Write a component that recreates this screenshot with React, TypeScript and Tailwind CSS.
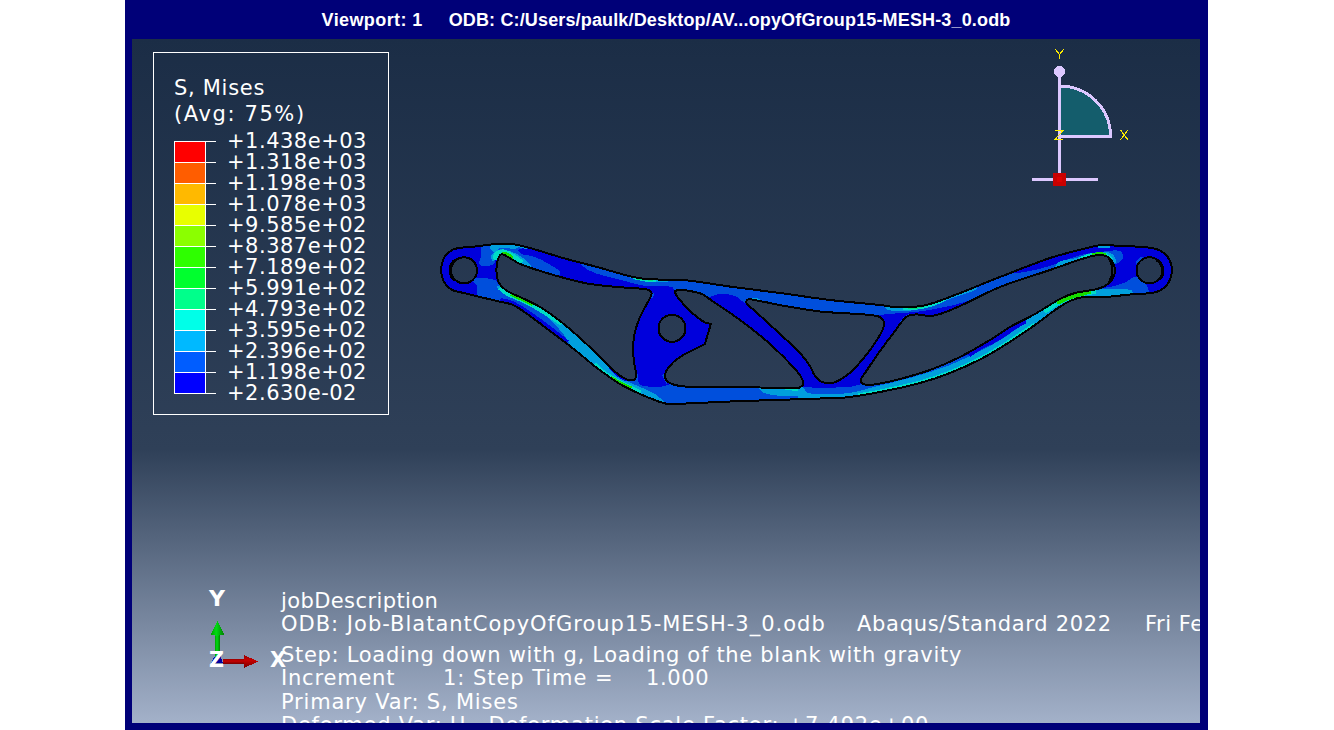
type Pt = [number, number];

/** Smooth curve through a list of points (Catmull-Rom converted to cubic segments). */
function curve(points: Pt[], closed = true): string {
  const n = points.length;
  const at = (i: number): Pt => (closed ? points[(i + n) % n] : points[Math.max(0, Math.min(n - 1, i))]);
  let d = `M${points[0][0]} ${points[0][1]}`;
  const last = closed ? n : n - 1;
  for (let i = 0; i < last; i++) {
    const [p0, p1, p2, p3] = [at(i - 1), at(i), at(i + 1), at(i + 2)];
    const len = Math.hypot(p2[0] - p1[0], p2[1] - p1[1]);
    const handle = (a: Pt, b: Pt): Pt => {
      const l = Math.hypot(b[0] - a[0], b[1] - a[1]) || 1;
      return [((b[0] - a[0]) / l) * len * 0.33, ((b[1] - a[1]) / l) * len * 0.33];
    };
    const h1 = handle(p0, p2);
    const h2 = handle(p1, p3);
    d += `C${p1[0] + h1[0]} ${p1[1] + h1[1]} ${p2[0] - h2[0]} ${p2[1] - h2[1]} ${p2[0]} ${p2[1]}`;
  }
  return closed ? d + 'Z' : d;
}

const circle = (cx: number, cy: number, r: number) =>
  `M${cx - r} ${cy}a${r} ${r} 0 1 0 ${2 * r} 0a${r} ${r} 0 1 0 ${-2 * r} 0Z`;

const outer = curve([
  [463, 247.5], [475, 246.5], [487, 245], [499, 243.7], [512, 244], [530, 248], [563, 258], [597, 267], [633, 277],
  [650, 279.3], [683, 280], [733, 287], [780, 293], [830, 300], [880, 305], [897, 307.3], [914, 307], [930, 304],
  [955, 295], [980, 285], [1000, 277], [1050, 258], [1085, 248.5], [1100, 245.3], [1123, 246], [1150, 247.7],
  [1161, 251], [1169, 259], [1172, 270], [1169, 282], [1161, 290], [1151, 293], [1130, 294.5], [1105, 297], [1083, 297],
  [1070, 301], [1055, 310], [1035, 325], [1005, 345], [980, 359.5], [950, 373], [920, 383], [880, 392], [845, 397.5],
  [820, 398.5], [775, 400], [730, 401.5], [675, 404], [668, 404], [660, 402], [640, 394], [620, 384], [597, 368],
  [575, 350], [550, 331], [530, 316], [513, 305], [497, 301], [480, 297], [464, 293], [452, 290], [444, 282],
  [441, 270], [444, 258], [452, 250],
]);

const leftWindow = curve([
  [501, 254.5], [497.5, 261], [496.5, 272], [499, 283], [507, 291], [520, 297], [540, 307], [560, 321], [580, 338],
  [600, 357], [612, 369], [622, 377], [630, 380.3], [635, 379], [636, 374], [634.5, 365], [633, 350], [634.5, 334],
  [640, 317], [650, 298], [651.5, 293], [647, 289.5], [630, 288], [597, 285], [580, 282], [550, 274], [520, 264], [508, 257],
]);

const middleWindow = curve([
  [675, 292], [679, 290], [690, 291], [702, 294], [708, 298], [740, 320], [770, 344], [796, 370], [803, 381],
  [802, 386], [796, 388.3], [760, 387.5], [700, 387], [680, 386], [668, 382], [665, 376], [668, 368], [680, 357],
  [704.9, 344], [705, 343.7], [710.8, 324], [710.6, 323.8], [704, 322], [690, 311], [680, 300],
]);

const triangleWindow = curve([
  [748, 299.5], [757, 300.5], [785, 306], [820, 311.5], [850, 313.5], [870, 315], [880, 317], [884, 323], [881, 333],
  [870, 350], [855, 368], [843, 378], [832, 383], [822, 382], [815, 376], [810, 366], [800, 353], [780, 334],
  [755, 311], [746.5, 303],
]);

const rightWindow = curve([
  [905, 318], [910, 315.2], [918, 314.5], [930, 316], [940, 314], [960, 306], [1000, 287], [1050, 270], [1085, 258],
  [1100, 255], [1110, 258.5], [1115, 270], [1112, 280], [1105, 286], [1095, 289.5], [1075, 293], [1060, 299],
  [1035, 314], [1010, 327], [990, 340], [960, 357], [930, 370], [900, 379], [880, 383.5], [867, 385], [862, 383],
  [861, 379], [865, 373], [880, 351], [895, 331],
]);

const holes = [circle(464, 270.3, 13), circle(672, 328.3, 13.5), circle(1149.5, 270.3, 13)];
const plate = [outer, leftWindow, middleWindow, triangleWindow, rightWindow, ...holes].join('');

const DARK = '#0000dc';
const MID = '#004fdc';
const LIGHT = '#009fdc';
const TEAL = '#00dcc6';
const SEA = '#00dc7a';
const GREEN = '#16dc00';

const areas: { color: string; pts: Pt[] }[] = [
  { color: MID, pts: [[483, 243], [500, 240], [528, 246], [518, 251], [535, 257], [547, 263], [560, 275], [540, 274], [515, 264], [497, 258], [494, 264], [480, 265], [481, 256]] },
  { color: MID, pts: [[473, 279], [495, 280], [500, 286], [510, 290], [516, 308], [497, 303], [479, 298], [477, 286]] },
  { color: MID, pts: [[579, 260], [588, 270], [605, 276], [625, 281], [645, 286], [672, 287], [676, 293], [700, 294], [708, 297], [720, 294], [735, 296], [747, 304], [780, 308], [820, 314], [870, 316], [888, 314], [915, 312], [940, 308], [965, 302], [990, 292], [1000, 290], [1050, 272], [1085, 262], [1100, 258], [1115, 264], [1123, 258], [1120, 251], [1100, 252], [1080, 255], [1050, 266], [1025, 272], [1004, 274], [980, 280], [900, 304], [780, 290], [650, 274]] },
  { color: MID, pts: [[500, 288], [530, 300], [580, 335], [625, 379], [637, 378], [640, 385], [662, 386.5], [675, 383], [684, 386], [800, 387], [812, 387.5], [850, 387], [862, 384], [890, 380], [930, 370], [965, 356], [1000, 340], [1035, 314], [1065, 294], [1110, 287], [1124, 283], [1137, 277], [1148, 288], [1147, 297], [1080, 300], [980, 363], [850, 400], [670, 408], [620, 386], [560, 338], [535, 319], [510, 301]] },
  { color: MID, pts: [[1136, 262], [1142, 257], [1145, 261], [1139, 266]] },
  { color: LIGHT, pts: [[490, 245], [500, 242], [518, 246], [500, 248], [494, 252]] },
  { color: LIGHT, pts: [[492, 254], [500, 249.5], [512, 252], [523, 258], [530, 267], [512, 260], [499, 256], [493, 261]] },
  { color: LIGHT, pts: [[497, 287], [503, 287], [525, 297], [550, 311], [590, 344], [604, 361], [622, 378], [665, 402], [640, 398], [600, 372], [575, 352], [564, 335], [546, 315], [530, 305], [510, 297]] },
  { color: LIGHT, pts: [[610, 270], [625, 276], [650, 282], [676, 281], [690, 281], [650, 275]] },
  { color: LIGHT, pts: [[885, 306], [903, 311], [925, 308], [950, 299], [975, 288], [940, 298], [905, 305]] },
  { color: LIGHT, pts: [[760, 388], [802, 387], [808, 393], [830, 394], [850, 393], [870, 388], [910, 378], [950, 365], [990, 346], [1018, 328], [1034, 313], [1062, 297], [1095, 290], [1120, 289], [1133, 293], [1120, 298], [1070, 301], [1000, 350], [920, 386], [850, 400], [800, 400], [797, 396], [782, 396], [764, 393]] },
  { color: LIGHT, pts: [[1055, 268], [1080, 257], [1100, 252], [1112, 254], [1115, 263], [1100, 257], [1080, 262]] },
];

const bands: { color: string; w: number; pts: Pt[] }[] = [
  { color: TEAL, w: 5, pts: [[495, 260], [497, 254], [504, 252], [514, 257], [522, 263]] },
  { color: GREEN, w: 3, pts: [[502, 253], [508, 254.5], [513, 258]] },
  { color: LIGHT, w: 3, pts: [[510, 244.5], [520, 246], [527, 248]] },
  { color: DARK, w: 6, pts: [[500, 301], [512, 304], [530, 315], [550, 329.5], [567, 343]] },
  { color: TEAL, w: 6, pts: [[500, 287], [508, 293], [530, 303], [550, 315], [562, 323]] },
  { color: GREEN, w: 4, pts: [[511, 294], [520, 298], [533, 304]] },
  { color: TEAL, w: 7, pts: [[594, 365], [602, 373], [620, 384], [640, 394]] },
  { color: GREEN, w: 5, pts: [[610, 378], [620, 384], [631, 389]] },
  { color: DARK, w: 4, pts: [[610, 367], [618, 374.5], [627, 380]] },
  { color: TEAL, w: 4, pts: [[633, 277], [645, 279.5], [656, 280]] },
  { color: SEA, w: 3, pts: [[637, 278], [653, 279.5]] },
  { color: TEAL, w: 4, pts: [[903, 308], [914, 308], [930, 305], [945, 299]] },
  { color: SEA, w: 3, pts: [[908, 308], [918, 307], [925, 305]] },
  { color: TEAL, w: 4, pts: [[785, 388], [798, 389]] },
  { color: TEAL, w: 5, pts: [[858, 396], [880, 392], [920, 383], [950, 373], [980, 359.5], [1005, 345], [1035, 325]] },
  { color: DARK, w: 7, pts: [[968, 354], [990, 340], [1007, 330], [1025, 320]] },
  { color: TEAL, w: 6, pts: [[1044, 311], [1060, 301], [1080, 293.5], [1096, 291]] },
  { color: GREEN, w: 4, pts: [[1057, 303], [1068, 298], [1078, 295], [1091, 291.5]] },
  { color: TEAL, w: 4, pts: [[1080, 259], [1092, 255], [1105, 255], [1112, 260]] },
  { color: GREEN, w: 3, pts: [[1092, 255], [1100, 253.5], [1106, 255]] },
  { color: LIGHT, w: 3, pts: [[1098, 246], [1110, 246]] },
  { color: MID, w: 3, pts: [[885, 346], [895, 332], [905, 318], [911, 315]] },
  { color: MID, w: 4, pts: [[651, 298], [652, 293]] },
  { color: MID, w: 4, pts: [[636, 374], [636, 382]] },
  { color: MID, w: 4, pts: [[664, 374], [668, 383]] },
  { color: LIGHT, w: 2.5, pts: [[750, 299], [760, 300]] },
];

function StressPlot() {
  return (
    <svg className="absolute inset-0 h-[684px] w-[1068px]" viewBox="132 39 1068 684" shapeRendering="crispEdges">
      <defs>
        <clipPath id="plate">
          <path d={plate} clipRule="evenodd" />
        </clipPath>
      </defs>
      <path d={plate} fill={DARK} fillRule="evenodd" />
      <g clipPath="url(#plate)">
        {areas.map((a, i) => (
          <path key={i} d={curve(a.pts)} fill={a.color} />
        ))}
        {bands.map((b, i) => (
          <path key={i} d={curve(b.pts, false)} fill="none" stroke={b.color} strokeWidth={b.w} />
        ))}
      </g>
      <path d={plate} fill="none" stroke="#000" strokeWidth="2" />
      <path d="M456 259.500a13 13 0 0 0 -1 21M1157 260a13 13 0 0 1 2 20" fill="none" stroke="#000" strokeWidth="3" />
      <path d="M1109 259Q1116 270 1109 282" fill="none" stroke="#000" strokeWidth="2" />
    </svg>
  );
}

function ViewCompass() {
  return (
    <svg className="absolute top-[6px] left-[896px] h-[150px] w-[104px]" viewBox="1028 45 104 150" shapeRendering="crispEdges">
      <path d="M1059.500 86A51 50 0 0 1 1110.500 136.500H1059.500Z" fill="#145d6c" stroke="#dcc8ff" strokeWidth="3" />
      <path d="M1059.500 72V180M1032 179.500H1098" stroke="#dcc8ff" strokeWidth="3" fill="none" />
      <circle cx="1059.500" cy="71.500" r="5.500" fill="#dcc8ff" />
      <rect x="1053" y="173" width="13" height="13" fill="#c80000" />
      <rect x="1057" y="177" width="5" height="5" fill="#dc0000" />
      <g stroke="#ffee00" strokeWidth="1" fill="none">
        <path d="M1055.500 49.500L1059.500 54.500L1063.500 49.500M1059.500 54V59" />
        <path d="M1055 130.500H1063L1055 139.500H1063" />
        <path d="M1120.500 130L1128 140M1128 130L1120.500 140" />
      </g>
    </svg>
  );
}

function AxisTriad() {
  return (
    <svg
      className="absolute top-[543px] left-[72px] h-[90px] w-[90px] font-['DejaVu_Sans'] text-[22px] font-bold"
      viewBox="204 582 90 90"
    >
      <defs>
        <linearGradient id="green" x1="0" x2="1" y1="0" y2="0">
          <stop offset="0" stopColor="#00a000" />
          <stop offset="0.4" stopColor="#00dc14" />
          <stop offset="1" stopColor="#008200" />
        </linearGradient>
        <linearGradient id="red" x1="0" x2="0" y1="0" y2="1">
          <stop offset="0" stopColor="#960000" />
          <stop offset="0.4" stopColor="#c80000" />
          <stop offset="1" stopColor="#780000" />
        </linearGradient>
      </defs>
      <g shapeRendering="crispEdges">
        <rect x="215" y="634" width="5" height="23" fill="url(#green)" />
        <path d="M217.500 621L224 634.500L217 636L211 634.500Z" fill="url(#green)" />
        <rect x="223" y="659" width="22" height="5" fill="url(#red)" />
        <path d="M258 661.500L244 668L244 655Z" fill="url(#red)" />
        <path d="M211 663L214 657L220 655L223 663Z" fill="#0000a0" />
      </g>
      <g fill="#fff">
        <text x="209" y="606" textLength="16" lengthAdjust="spacingAndGlyphs">Y</text>
        <text x="209" y="667" textLength="15" lengthAdjust="spacingAndGlyphs">Z</text>
        <text x="270" y="667" textLength="16" lengthAdjust="spacingAndGlyphs">X</text>
      </g>
    </svg>
  );
}

const swatches = [
  'bg-[#ff0000]', 'bg-[#ff5d00]', 'bg-[#ffb900]', 'bg-[#e8ff00]', 'bg-[#8bff00]', 'bg-[#2eff00]',
  'bg-[#00ff2e]', 'bg-[#00ff8b]', 'bg-[#00ffe8]', 'bg-[#00b9ff]', 'bg-[#005dff]', 'bg-[#0000ff]',
];

const levels = [
  '+1.438e+03', '+1.318e+03', '+1.198e+03', '+1.078e+03', '+9.585e+02', '+8.387e+02', '+7.189e+02',
  '+5.991e+02', '+4.793e+02', '+3.595e+02', '+2.396e+02', '+1.198e+02', '+2.630e-02',
];

function Legend() {
  return (
    <section className="absolute top-[13px] left-[21px] h-[363px] w-[236px] border border-white pt-[22px] pl-5">
      <div className="text-[21px] leading-[26px]">
        <p className="tracking-[0.7px]">S, Mises</p>
        <p className="tracking-[1.6px]">(Avg: 75%)</p>
      </div>
      <div className="mt-[14px] flex">
        <ul className="h-[253px] w-[32px] border-x border-b border-white">
          {swatches.map((color) => (
            <li key={color} className={`h-[21px] border-t border-white ${color}`} />
          ))}
        </ul>
        <ul className="w-[10px]">
          {levels.map((level) => (
            <li key={level} className="h-[21px] border-t border-white" />
          ))}
        </ul>
        <ul className="-mt-[10px] ml-[11px] text-[21px] leading-[21px] tracking-[0.5px]">
          {levels.map((level) => (
            <li key={level}>{level}</li>
          ))}
        </ul>
      </div>
    </section>
  );
}

function JobInfo() {
  return (
    <section className="absolute top-[551px] left-[149px] text-[21px] leading-[23px] whitespace-pre">
      <p className="tracking-[0.4px]">jobDescription</p>
      <p className="flex">
        <span className="w-[576px] tracking-[1px]">ODB: Job-BlatantCopyOfGroup15-MESH-3_0.odb</span>
        <span className="w-[288px] tracking-[0.7px]">Abaqus/Standard 2022</span>
        <span className="tracking-[0.5px]">Fri Feb</span>
      </p>
      <p className="mt-2 tracking-[0.7px]">Step: Loading down with g, Loading of the blank with gravity</p>
      <p className="flex">
        <span className="w-[162px] tracking-[0.8px]">Increment</span>
        <span className="w-[203px] tracking-[0.95px]">1: Step Time =</span>
        <span className="tracking-[0.6px]">1.000</span>
      </p>
      <p className="mt-px tracking-[0.8px]">Primary Var: S, Mises</p>
      <p className="tracking-[0.75px]">Deformed Var: U   Deformation Scale Factor: +7.492e+00</p>
    </section>
  );
}

export default function App() {
  return (
    <main className="h-[730px] w-[1334px] overflow-hidden bg-white pl-[125px]">
      <div className="flex h-[730px] w-[1083px] flex-col bg-[#000078] pr-2 pb-[7px] pl-[7px] text-white">
        <header className="flex h-[39px] justify-center gap-[26px] font-['Liberation_Sans'] text-[18px] leading-[40px] font-bold tracking-[0.15px] whitespace-nowrap">
          <span className="tracking-[0.4px]">Viewport: 1</span>
          <span>ODB: C:/Users/paulk/Desktop/AV...opyOfGroup15-MESH-3_0.odb</span>
        </header>
        <div className="relative h-[684px] overflow-hidden bg-[linear-gradient(to_bottom,#1b2d46_0%,#2f4058_60%,#a3b1c9_100%)] font-['DejaVu_Sans',sans-serif]">
          <StressPlot />
          <Legend />
          <ViewCompass />
          <JobInfo />
          <AxisTriad />
        </div>
      </div>
    </main>
  );
}
